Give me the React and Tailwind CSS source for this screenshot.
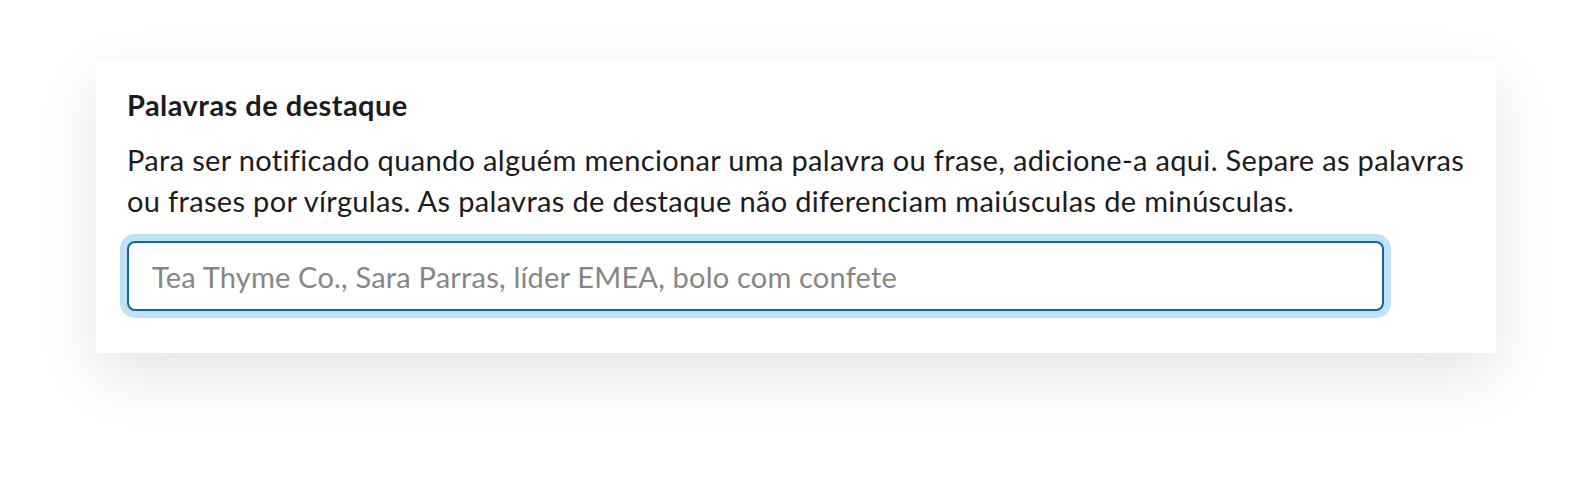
import React from 'react';

const HighlightWords = () => {
  return (
    <div className="min-h-[486px] bg-white pt-[60px] pl-[96px] font-['Lato',sans-serif]">
      <div className="w-[1400px] bg-white pt-[24px] px-[31px] pb-[42px] shadow-[0_22px_60px_rgba(0,0,0,0.11)]">
        <h2 className="text-[29px] leading-[41px] tracking-[0.45px] font-bold text-[#1d1c1d]">Palavras de destaque</h2>
        <p className="mt-[14px] text-[29px] leading-[41px] tracking-[0.33px] text-[#1d1c1d]">
          Para ser notificado quando alguém mencionar uma palavra ou frase, adicione-a aqui. Separe as palavras ou frases por vírgulas. As palavras de destaque não diferenciam maiúsculas de minúsculas.
        </p>
        <input
          type="text"
          placeholder="Tea Thyme Co., Sara Parras, líder EMEA, bolo com confete"
          className="mt-[20px] block w-[1257px] h-[70px] rounded-[8px] border-2 border-[#1264a3] bg-white px-[23px] text-[29px] tracking-[0.2px] text-[#1d1c1d] placeholder:text-[#868686] outline-none shadow-[0_0_0_7px_#c0e2f6] font-['Lato',sans-serif]"
        />
      </div>
    </div>
  );
};

export default HighlightWords;
